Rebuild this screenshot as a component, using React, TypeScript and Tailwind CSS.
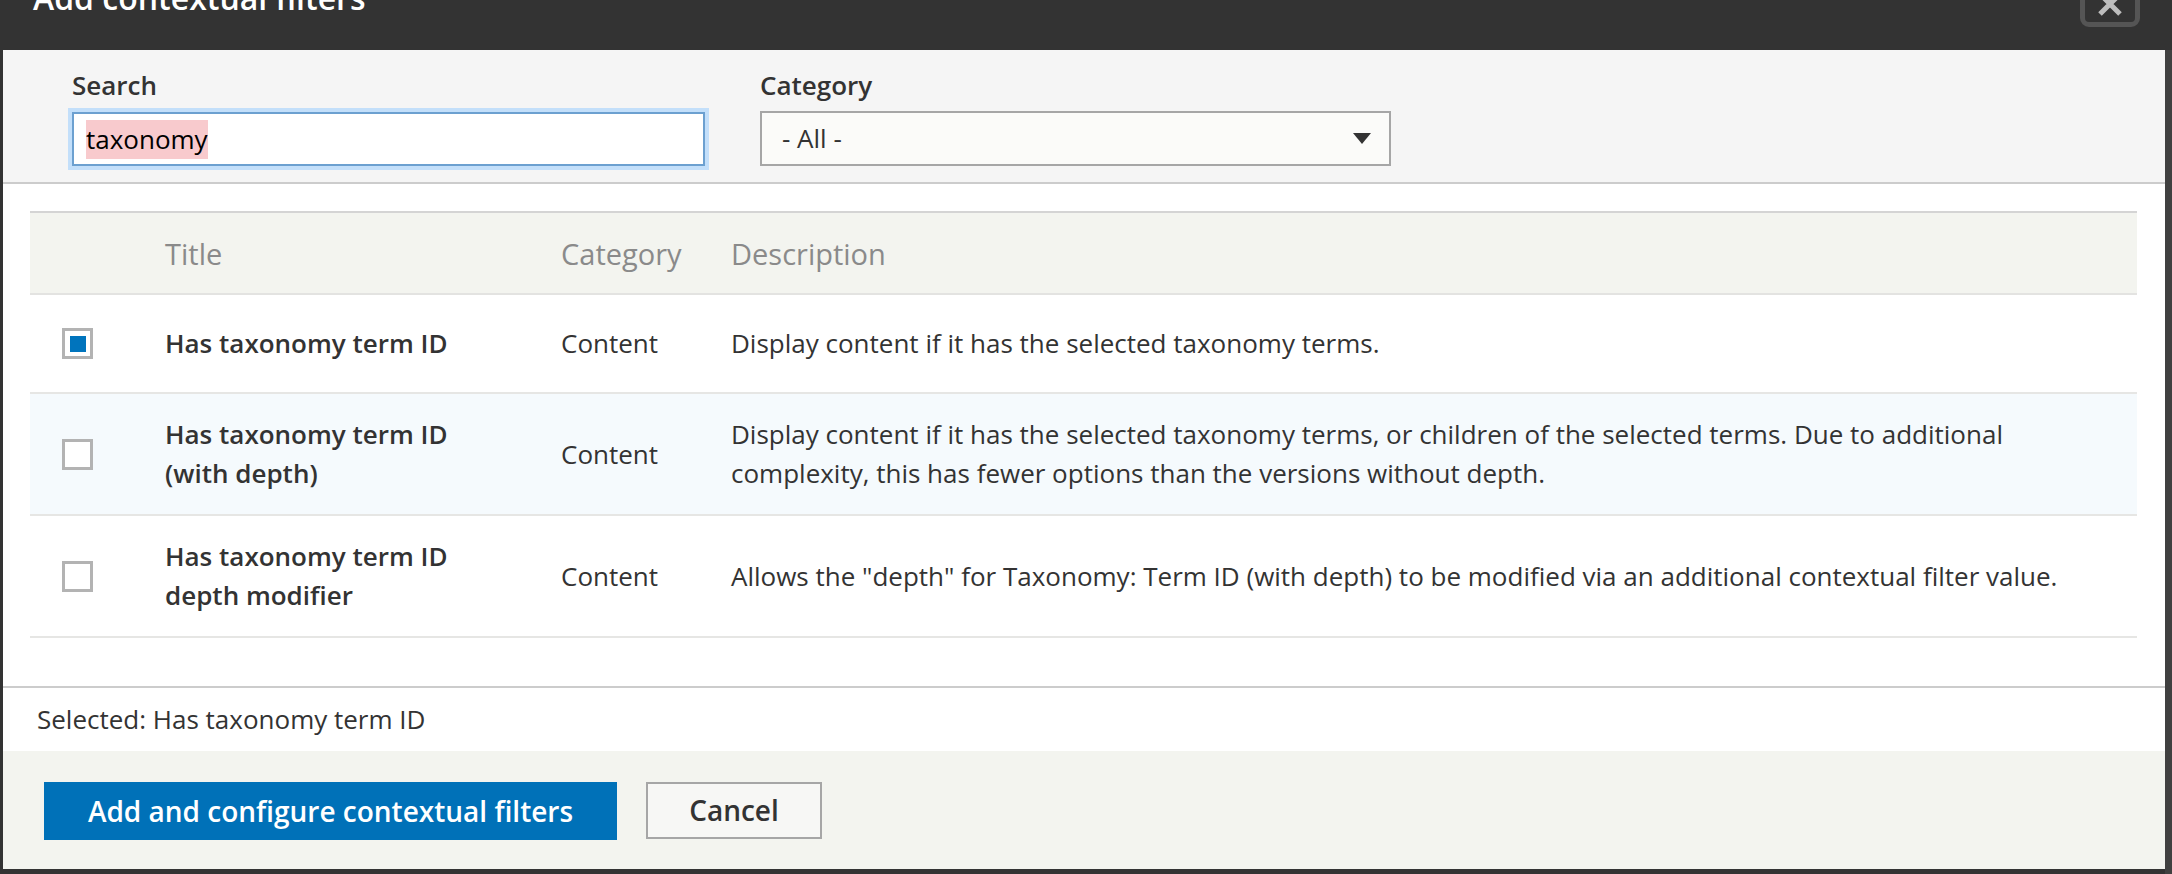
import React from "react"

const rows = [
  {
    title: ["Has taxonomy term ID"],
    category: "Content",
    description: "Display content if it has the selected taxonomy terms.",
    checked: true,
    height: "h-[99px]",
    bg: "bg-white",
  },
  {
    title: ["Has taxonomy term ID", "(with depth)"],
    category: "Content",
    description:
      "Display content if it has the selected taxonomy terms, or children of the selected terms. Due to additional complexity, this has fewer options than the versions without depth.",
    checked: false,
    height: "h-[122px]",
    bg: "bg-[#f5fafd]",
  },
  {
    title: ["Has taxonomy term ID", "depth modifier"],
    category: "Content",
    description:
      'Allows the "depth" for Taxonomy: Term ID (with depth) to be modified via an additional contextual filter value.',
    checked: false,
    height: "h-[122px]",
    bg: "bg-white",
  },
]

const Checkbox = ({ checked }: { checked: boolean }) => (
  <div className="flex h-[31px] w-[31px] items-center justify-center border-[3px] border-[#b3b3b3] bg-white">
    {checked && <div className="h-[16px] w-[16px] bg-[#0074bd]" />}
  </div>
)

export default function App() {
  return (
    <div className="flex h-[874px] w-[2172px] flex-col overflow-hidden bg-[#333333] font-['Open_Sans',sans-serif] text-[26px] leading-[39px] text-[#333333]">
      {/* Dialog title bar, cut off at the top */}
      <div className="flex h-[50px] shrink-0 items-start justify-between pl-[33px] pr-[32px]">
        <h1 className="-mt-[18px] text-[32px] font-semibold leading-[32px] text-white">
          Add contextual filters
        </h1>
        <button
          aria-label="Close"
          className="-mt-[19px] flex h-[46px] w-[60px] items-center justify-center rounded-[9px] border-[5px] border-[#555555] bg-[#333333]"
        >
          <svg width="26" height="26" viewBox="0 0 26 26">
            <path d="M3 3 L23 23 M23 3 L3 23" stroke="#bdbdbd" strokeWidth="5" />
          </svg>
        </button>
      </div>

      <div className="flex flex-1">
        <div className="w-[3px] shrink-0" />

        {/* Dialog body */}
        <div className="flex h-[819px] w-[2162px] shrink-0 flex-col bg-white">
          {/* Filter controls */}
          <div className="flex h-[134px] shrink-0 gap-[55px] border-b-2 border-[#cccccc] bg-[#f5f5f5] pl-[69px] pt-[16px]">
            <div className="flex flex-col">
              <label className="font-semibold">Search</label>
              <div className="mt-[7px] flex h-[54px] w-[633px] items-center border-2 border-[#6ca0d0] bg-white pl-[12px] shadow-[0_0_0_4px_#c3dffa]">
                <span className="bg-[#f8cacd] text-black">taxonomy</span>
              </div>
            </div>
            <div className="flex flex-col">
              <label className="font-semibold">Category</label>
              <div className="mt-[6px] flex h-[55px] w-[631px] items-center justify-between border-2 border-[#a6a6a6] bg-[#fbfbf9] pl-[20px] pr-[18px]">
                <span>- All -</span>
                <svg width="18" height="11" viewBox="0 0 18 11">
                  <path d="M0 0 H18 L9 11 Z" fill="#333333" />
                </svg>
              </div>
            </div>
          </div>

          {/* Results table */}
          <div className="flex h-[502px] shrink-0 flex-col px-[27px] pr-[28px] pt-[27px]">
            <div className="grid h-[84px] grid-cols-[135px_396px_170px_1fr] items-center border-y-2 border-t-[#d4d4d4] border-b-[#e3e3e1] bg-[#f3f4ef] text-[29px] text-[#8a8a8a]">
              <div />
              <div>Title</div>
              <div>Category</div>
              <div>Description</div>
            </div>
            {rows.map((row, i) => (
              <div
                key={i}
                className={`grid ${row.height} grid-cols-[135px_396px_170px_1fr] items-center border-b-2 border-[#e6e6e4] ${row.bg}`}
              >
                <div className="pl-[32px]">
                  <Checkbox checked={row.checked} />
                </div>
                <div className="font-semibold">
                  {row.title.map((line) => (
                    <div key={line}>{line}</div>
                  ))}
                </div>
                <div>{row.category}</div>
                <div className="pr-[40px]">{row.description}</div>
              </div>
            ))}
          </div>

          {/* Selection summary */}
          <div className="flex h-[65px] shrink-0 items-center border-t-2 border-[#cccccc] pl-[34px]">
            Selected: Has taxonomy term ID
          </div>

          {/* Footer buttons */}
          <div className="flex h-[118px] shrink-0 items-start gap-[29px] bg-[#f3f4ef] pl-[41px] pt-[31px]">
            <button className="flex h-[58px] w-[573px] items-center justify-center bg-[#0071b8] text-[28px] font-semibold text-white">
              Add and configure contextual filters
            </button>
            <button className="flex h-[57px] w-[176px] items-center justify-center border-2 border-[#a6a6a6] bg-[#f7f7f5] text-[28px] font-semibold text-[#333333]">
              Cancel
            </button>
          </div>
        </div>

        <div className="flex-1 bg-[#404040]" />
      </div>
    </div>
  )
}
